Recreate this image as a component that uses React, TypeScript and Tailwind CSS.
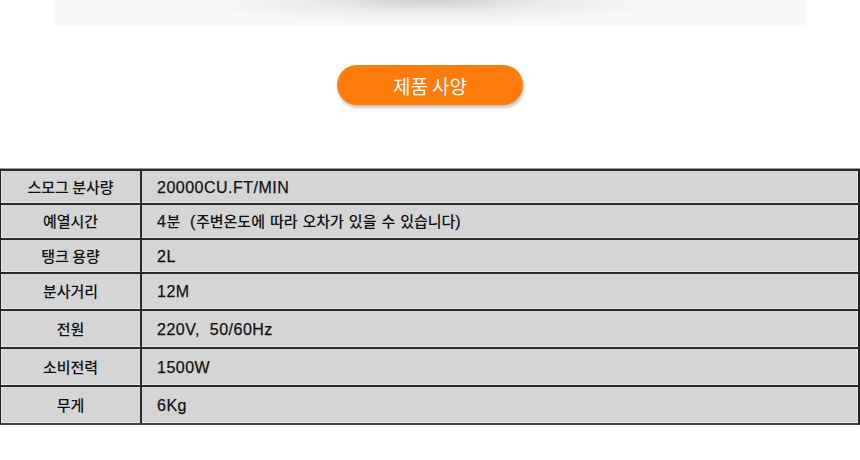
import React from "react";

const rows: { label: string; value: string; h: string }[] = [
  { label: "스모그 분사량", value: "20000CU.FT/MIN", h: "h-[34px]" },
  { label: "예열시간", value: "4분 \u00a0(주변온도에 따라 오차가 있을 수 있습니다)", h: "h-[35px]" },
  { label: "탱크 용량", value: "2L", h: "h-[34px]" },
  { label: "분사거리", value: "12M", h: "h-[37px]" },
  { label: "전원", value: "220V,\u00a0 50/60Hz", h: "h-[38px]" },
  { label: "소비전력", value: "1500W", h: "h-[38px]" },
  { label: "무게", value: "6Kg", h: "h-[38px]" },
];

function Mixed({ text }: { text: string }) {
  const parts = text.split(/([\uAC00-\uD7A3\u3131-\u318E]+)/).filter((p) => p.length > 0);
  return (
    <span className="whitespace-pre">
      {parts.map((p, i) =>
        /[\uAC00-\uD7A3\u3131-\u318E]/.test(p) ? (
          <span key={i} className="font-['Noto_Sans_CJK_KR',sans-serif] text-[15px] font-medium">
            {p}
          </span>
        ) : (
          <span key={i} className="font-['Liberation_Sans','Noto_Sans_CJK_KR',sans-serif] text-[16px] tracking-[0.5px] [-webkit-text-stroke:0.25px_#111]">
            {p}
          </span>
        )
      )}
    </span>
  );
}

export default function App() {
  return (
    <div className="w-[860px] h-[460px] bg-white overflow-hidden text-[#111]">
      <div className="flex justify-center">
        <div className="w-[752px] h-[26px] bg-[radial-gradient(ellipse_32%_90%_at_50%_0%,#d0d0d0_0%,#ebebeb_50%,#f9f9f9_100%)]" />
      </div>
      <div className="flex justify-center mt-[39px]">
        <div className="w-[186px] h-[40px] rounded-full bg-[#ff7b0a] shadow-[1px_3px_3px_rgba(0,0,0,0.22)] flex items-center justify-center">
          <span className="text-white text-[19px] font-['Noto_Sans_CJK_KR',sans-serif] leading-none">제품 사양</span>
        </div>
      </div>
      <div className="mt-[63px] border-t border-[#9a9a9a] w-[860px]">
        <div className="border-l border-[#222] border-r-2 border-b-2 border-r-[#222] border-b-[#444]">
          {rows.map((r) => (
            <div key={r.label} className={`flex ${r.h}`}>
              <div className="w-[139px] border-t-2 border-[#2a2a2a] bg-[#d5d5d5] shadow-[inset_0_-1px_0_#e9e9e9,inset_1px_0_0_#e6e6e6] flex items-center justify-center">
                <span className="font-['Noto_Sans_CJK_KR',sans-serif] text-[15px] font-medium whitespace-pre">{r.label}</span>
              </div>
              <div className="flex-1 border-t-2 border-l-2 border-[#2a2a2a] bg-[#d5d5d5] shadow-[inset_0_-1px_0_#e9e9e9,inset_-1px_0_0_#e9e9e9] flex items-center pl-[15px]">
                <Mixed text={r.value} />
              </div>
            </div>
          ))}
        </div>
      </div>
    </div>
  );
}
